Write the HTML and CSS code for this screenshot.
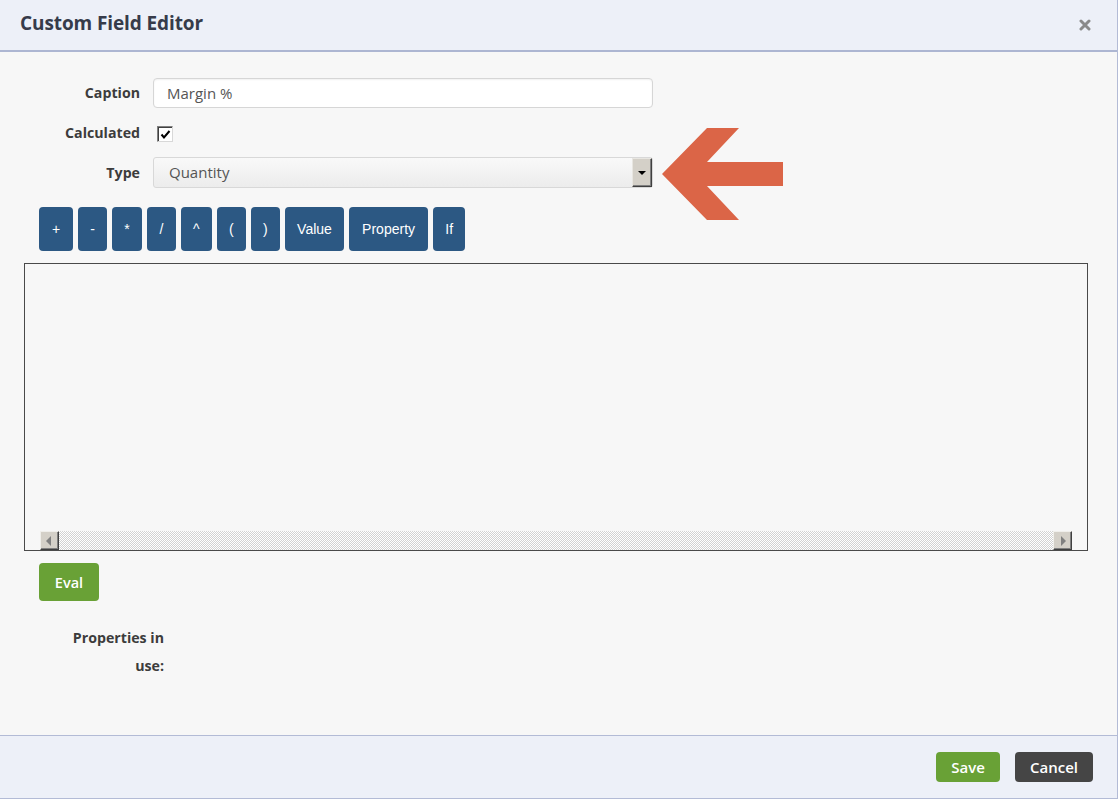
FILE: index.html
```html
<!DOCTYPE html>
<html lang="en">
<head>
<meta charset="utf-8">
<title>Custom Field Editor</title>
<link rel="stylesheet" href="styles.css">
</head>
<body>
<div class="dialog">
  <header class="dlg-head">
    <h1 class="dlg-title">Custom Field Editor</h1>
    <button class="dlg-close" aria-label="Close">
      <svg width="12" height="12" viewBox="0 0 12 12"><path d="M2 2 L10 10 M10 2 L2 10" stroke="#8a8a8a" stroke-width="3" stroke-linecap="round"/></svg>
    </button>
  </header>

  <main class="dlg-body">
    <div class="form">
      <label class="form-label">Caption</label>
      <div class="text-input">Margin %</div>

      <label class="form-label">Calculated</label>
      <div class="check-cell">
        <span class="checkbox">
          <svg width="11" height="11" viewBox="0 0 11 11"><path d="M1.5 5.5 L4 8.5 L9.5 2" fill="none" stroke="#000" stroke-width="2"/></svg>
        </span>
      </div>

      <label class="form-label">Type</label>
      <div class="select">
        <span class="select-value">Quantity</span>
        <span class="select-btn"><span class="tri-down"></span></span>
      </div>
    </div>

    <div class="toolbar">
      <button class="tb-btn tb-plus">+</button>
      <button class="tb-btn">-</button>
      <button class="tb-btn">*</button>
      <button class="tb-btn">/</button>
      <button class="tb-btn">^</button>
      <button class="tb-btn">(</button>
      <button class="tb-btn">)</button>
      <button class="tb-btn">Value</button>
      <button class="tb-btn tb-prop">Property</button>
      <button class="tb-btn">If</button>
    </div>

    <div class="editor">
      <div class="editor-area"></div>
      <div class="hscroll">
        <span class="sb-btn"><span class="tri-left"></span></span>
        <span class="sb-track"></span>
        <span class="sb-btn"><span class="tri-right"></span></span>
      </div>
    </div>

    <button class="btn btn-green eval-btn">Eval</button>

    <div class="props">
      <span class="props-label">Properties in use:</span>
    </div>
  </main>

  <footer class="dlg-foot">
    <button class="btn btn-green foot-btn">Save</button>
    <button class="btn btn-dark foot-btn">Cancel</button>
  </footer>

  <svg class="annot-arrow" width="122" height="96" viewBox="0 0 122 96">
    <polygon points="0,47 45,1 77,1 45,35 121,35 121,59 45,59 77,93 45,93" fill="#db6547"/>
  </svg>
</div>
</body>
</html>
```

FILE: styles.css
```css
* { box-sizing: border-box; }

html, body {
  margin: 0;
  padding: 0;
  background: #ffffff;
}

body {
  font-family: "Open Sans", "Liberation Sans", sans-serif;
  color: #3a3a3a;
}

.dialog {
  position: relative;
  width: 1118px;
  height: 799px;
  display: flex;
  flex-direction: column;
  border-right: 1px solid #b3bbd6;
  border-bottom: 1px solid #b3bbd6;
}

.dlg-head {
  height: 52px;
  flex: 0 0 auto;
  background: #edf0f8;
  border-bottom: 2px solid #adb6d2;
  display: flex;
  align-items: center;
  justify-content: space-between;
  padding: 0 26px 5px 20px;
}

.dlg-title {
  margin: 0;
  font-size: 19px;
  font-weight: 700;
  color: #363b4a;
  letter-spacing: -0.1px;
}

.dlg-close {
  border: 0;
  background: transparent;
  padding: 0;
  margin-top: 4px;
  width: 12px;
  height: 12px;
  display: flex;
  cursor: pointer;
}

.dlg-body {
  flex: 1 1 auto;
  background: #f7f7f7;
  padding: 26px 29px 0 24px;
  display: flex;
  flex-direction: column;
  align-items: flex-start;
}

.form {
  display: grid;
  grid-template-columns: 116px 500px;
  grid-template-rows: 30px 49px 31px;
  column-gap: 13px;
  align-items: center;
}

.form-label {
  text-align: right;
  font-size: 14.2px;
  font-weight: 700;
  color: #3c3c3c;
  line-height: 30px;
}

.text-input {
  height: 30px;
  width: 500px;
  background: #ffffff;
  border: 1px solid #d6d6d6;
  border-radius: 4px;
  box-shadow: inset 0 1px 2px rgba(0,0,0,0.06);
  font-size: 15px;
  line-height: 28px;
  padding: 0 13px;
  color: #555;
}

.check-cell {
  display: flex;
  align-items: center;
  padding-left: 4px;
  padding-top: 2px;
}

.checkbox {
  width: 16px;
  height: 16px;
  background: #fff;
  border-top: 1px solid #808080;
  border-left: 1px solid #808080;
  border-right: 1px solid #d8d8d8;
  border-bottom: 1px solid #d8d8d8;
  box-shadow: inset 1px 1px 0 #404040;
  display: flex;
  align-items: center;
  justify-content: center;
  padding: 1px 0 0 1px;
}

.select {
  height: 31px;
  width: 500px;
  border: 1px solid #d8d8d8;
  border-radius: 3px;
  background: linear-gradient(#f9f9f9, #ececec);
  display: flex;
  align-items: stretch;
  justify-content: space-between;
  font-size: 15px;
  color: #555;
}

.select-value {
  line-height: 29px;
  padding-left: 15px;
}

.select-btn {
  width: 20px;
  background: #d4d0c8;
  border-top: 1px solid #e8e6e1;
  border-left: 1px solid #e8e6e1;
  border-right: 1px solid #404040;
  border-bottom: 1px solid #404040;
  box-shadow: inset -1px -1px 0 #808080;
  display: flex;
  align-items: center;
  justify-content: center;
}

.tri-down {
  width: 0; height: 0;
  border-left: 4px solid transparent;
  border-right: 4px solid transparent;
  border-top: 4px solid #000;
}

.toolbar {
  margin-top: 19px;
  margin-left: 15px;
  display: flex;
  gap: 5px;
}

.tb-btn {
  height: 44px;
  min-width: 29px;
  padding: 0 12.2px;
  border: 0;
  border-radius: 4px;
  background: #2c5883;
  color: #ffffff;
  font-family: "Liberation Sans", Arial, sans-serif;
  font-size: 14px;
}

.tb-plus { min-width: 34px; }
.tb-prop { min-width: 79px; }

.editor {
  margin-top: 12px;
  width: 1064px;
  height: 288px;
  border: 1px solid #4a4a4a;
  display: flex;
  flex-direction: column;
}

.editor-area {
  flex: 1 1 auto;
}

.hscroll {
  height: 19px;
  margin: 0 15px 0 15px;
  display: flex;
}

.sb-btn {
  width: 19px;
  height: 19px;
  background: #d4d0c8;
  border-top: 1px solid #f0efeb;
  border-left: 1px solid #f0efeb;
  border-right: 1px solid #404040;
  border-bottom: 1px solid #404040;
  box-shadow: inset -1px -1px 0 #808080;
  display: flex;
  align-items: center;
  justify-content: center;
}

.sb-track {
  flex: 1 1 auto;
  background: repeating-conic-gradient(#d2d2d2 0 25%, #ffffff 0 50%) 0 0 / 2px 2px;
}

.tri-left {
  width: 0; height: 0;
  border-top: 5px solid transparent;
  border-bottom: 5px solid transparent;
  border-right: 5px solid #808080;
  margin-right: 2px;
}

.tri-right {
  width: 0; height: 0;
  border-top: 5px solid transparent;
  border-bottom: 5px solid transparent;
  border-left: 5px solid #808080;
  margin-left: 2px;
}

.btn {
  border: 0;
  border-radius: 4px;
  color: #ffffff;
  font-family: "Open Sans", "Liberation Sans", sans-serif;
  font-weight: 600;
  cursor: pointer;
}

.btn-green { background: #69a136; }
.btn-dark { background: #454545; }

.eval-btn {
  margin-top: 12px;
  margin-left: 15px;
  height: 38px;
  width: 60px;
  font-size: 14.5px;
}

.props {
  margin-top: 23px;
  padding-left: 38px;
}

.props-label {
  display: block;
  width: 102px;
  text-align: right;
  font-size: 14.2px;
  font-weight: 700;
  line-height: 28px;
  color: #3c3c3c;
}

.dlg-foot {
  height: 63px;
  flex: 0 0 auto;
  background: #edf0f8;
  border-top: 1px solid #b3bbd6;
  display: flex;
  align-items: center;
  justify-content: flex-end;
  gap: 15px;
  padding: 0 24px 0 0;
}

.foot-btn {
  height: 30px;
  font-size: 15px;
  padding: 0 15px;
}

.foot-btn.btn-green { width: 64px; }
.foot-btn.btn-dark { width: 78px; }

.annot-arrow {
  position: absolute;
  left: 662px;
  top: 127px;
}
```
